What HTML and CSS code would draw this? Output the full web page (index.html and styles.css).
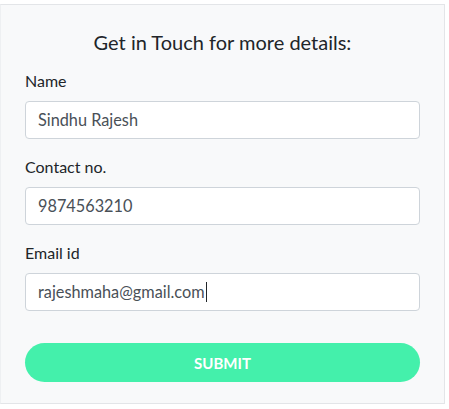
FILE: index.html
```html
<!DOCTYPE html>
<html lang="en">
<head>
<meta charset="utf-8">
<title>Get in Touch</title>
<link rel="stylesheet" href="styles.css">
</head>
<body>
<div class="card">
  <h5 class="title">Get in Touch for more details:</h5>
  <form class="form">
    <div class="group">
      <label class="label" for="name">Name</label>
      <div class="control" id="name">Sindhu Rajesh</div>
    </div>
    <div class="group">
      <label class="label" for="contact">Contact no.</label>
      <div class="control" id="contact">9874563210</div>
    </div>
    <div class="group">
      <label class="label" for="email">Email id</label>
      <div class="control" id="email">rajeshmaha@gmail.com<span class="caret"></span></div>
    </div>
    <div class="submit">SUBMIT</div>
  </form>
</div>
</body>
</html>
```
FILE: styles.css
```css
* { box-sizing: border-box; }
html, body { margin: 0; padding: 0; background: #ffffff; }
body {
  font-family: "Lato", "Liberation Sans", sans-serif;
  color: #212529;
}
.card {
  margin-top: 4px;
  width: 445px;
  height: 400px;
  background: #f8f9fa;
  border: 1px solid #e3e5e8;
  border-left-color: #eef0f2;
  padding: 23px 24px 0 24px;
}
.title {
  margin: 0 0 13px 0;
  font-size: 20px;
  font-weight: 400;
  line-height: 28px;
  text-align: center;
}
.form { display: flex; flex-direction: column; }
.group { display: flex; flex-direction: column; margin-bottom: 16px; }
.label {
  font-size: 16px;
  line-height: 24px;
  margin-bottom: 8px;
}
.control {
  height: 38px;
  background: #ffffff;
  border: 1px solid #ced4da;
  border-radius: 4px;
  padding: 0 12px;
  font-size: 16.3px;
  line-height: 36px;
  color: #495057;
  display: flex;
  align-items: center;
}
.caret {
  display: inline-block;
  width: 1px;
  height: 20px;
  background: #212529;
  margin-left: 1px;
}
.submit {
  margin-top: 16px;
  height: 39px;
  border-radius: 20px;
  background: #44f0ab;
  color: #ffffff;
  font-weight: 700;
  font-size: 15px;
  display: flex;
  align-items: center;
  justify-content: center;
}
```
